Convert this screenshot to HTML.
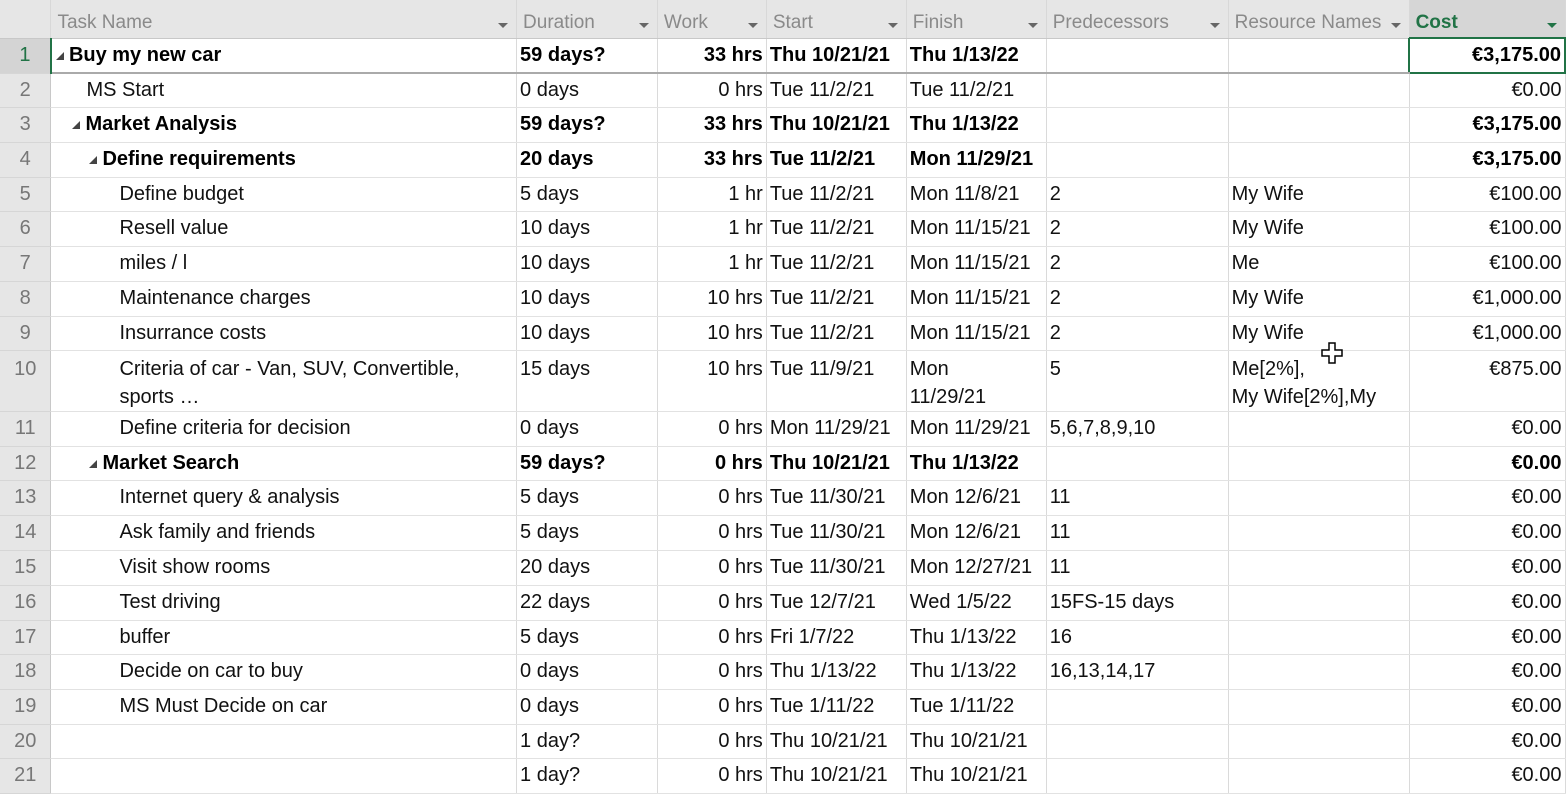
<!DOCTYPE html>
<html><head><meta charset="utf-8"><style>
*{margin:0;padding:0;box-sizing:border-box}
body{width:1566px;height:795px;overflow:hidden;background:#fff;font-family:"Liberation Sans",sans-serif;font-size:20px;color:#111}
table{border-collapse:collapse;table-layout:fixed;position:absolute;left:0;top:0}
td,th{overflow:hidden;white-space:nowrap;border-right:1px solid #dadada;border-bottom:1px solid #e2e2e2;padding:0 3px;vertical-align:middle}
th{background:#e6e6e6;font-weight:normal;color:#8a8a8a;text-align:left;height:38px;border-bottom:1px solid #c8c8c8;border-right:1px solid #d8d8d8;position:relative;padding-left:6px;padding-top:8px;font-size:19px}
th .dd{position:absolute;right:8px;top:23px;width:0;height:0;border-left:5px solid transparent;border-right:5px solid transparent;border-top:5px solid #666}
td.n{background:#e6e6e6;color:#777;text-align:center;border-right:1px solid #c8c8c8;border-bottom:1px solid #d6d6d6;font-weight:normal}
.b{font-weight:bold;color:#000}
.r{text-align:right}
.tri{display:inline-block;width:0;height:0;border-left:8px solid transparent;border-bottom:8px solid #444;margin-right:5px;vertical-align:1px}
tr.t10 td{vertical-align:top;padding-top:4px;white-space:normal;line-height:28px}
</style></head><body>
<table>
<colgroup><col style="width:51px"><col style="width:466px"><col style="width:141px"><col style="width:109px"><col style="width:140px"><col style="width:140px"><col style="width:182px"><col style="width:181px"><col style="width:156px"></colgroup>
<tr><th style="background:#e6e6e6"></th><th>Task Name<span class="dd"></span></th><th>Duration<span class="dd"></span></th><th>Work<span class="dd"></span></th><th>Start<span class="dd"></span></th><th>Finish<span class="dd"></span></th><th>Predecessors<span class="dd"></span></th><th>Resource Names<span class="dd"></span></th><th style="background:#d6d6d6;color:#217346;font-weight:bold">Cost<span class="dd" style="border-top-color:#217346"></span></th></tr>
<tr style="height:35px" class="b"><td class="n" style="background:#d4d4d4;color:#217346;border-right:2px solid #217346">1</td><td style="padding-left:4px;border-bottom:2px solid #aaa"><span class="tri"></span>Buy my new car</td><td style="border-bottom:2px solid #aaa">59 days?</td><td class="r" style="border-bottom:2px solid #aaa">33 hrs</td><td style="border-bottom:2px solid #aaa">Thu 10/21/21</td><td style="border-bottom:2px solid #aaa">Thu 1/13/22</td><td style="border-bottom:2px solid #aaa"></td><td style="border-bottom:2px solid #aaa"></td><td class="r" style="border:2px solid #217346">€3,175.00</td></tr>
<tr style="height:34px"><td class="n">2</td><td style="padding-left:35px">MS Start</td><td>0 days</td><td class="r">0 hrs</td><td>Tue 11/2/21</td><td>Tue 11/2/21</td><td></td><td></td><td class="r">€0.00</td></tr>
<tr style="height:35px" class="b"><td class="n">3</td><td style="padding-left:21px"><span class="tri"></span>Market Analysis</td><td>59 days?</td><td class="r">33 hrs</td><td>Thu 10/21/21</td><td>Thu 1/13/22</td><td></td><td></td><td class="r">€3,175.00</td></tr>
<tr style="height:35px" class="b"><td class="n">4</td><td style="padding-left:38px"><span class="tri"></span>Define requirements</td><td>20 days</td><td class="r">33 hrs</td><td>Tue 11/2/21</td><td>Mon 11/29/21</td><td></td><td></td><td class="r">€3,175.00</td></tr>
<tr style="height:34px"><td class="n">5</td><td style="padding-left:68px">Define budget</td><td>5 days</td><td class="r">1 hr</td><td>Tue 11/2/21</td><td>Mon 11/8/21</td><td>2</td><td>My Wife</td><td class="r">€100.00</td></tr>
<tr style="height:35px"><td class="n">6</td><td style="padding-left:68px">Resell value</td><td>10 days</td><td class="r">1 hr</td><td>Tue 11/2/21</td><td>Mon 11/15/21</td><td>2</td><td>My Wife</td><td class="r">€100.00</td></tr>
<tr style="height:35px"><td class="n">7</td><td style="padding-left:68px">miles / l</td><td>10 days</td><td class="r">1 hr</td><td>Tue 11/2/21</td><td>Mon 11/15/21</td><td>2</td><td>Me</td><td class="r">€100.00</td></tr>
<tr style="height:35px"><td class="n">8</td><td style="padding-left:68px">Maintenance charges</td><td>10 days</td><td class="r">10 hrs</td><td>Tue 11/2/21</td><td>Mon 11/15/21</td><td>2</td><td>My Wife</td><td class="r">€1,000.00</td></tr>
<tr style="height:34px"><td class="n">9</td><td style="padding-left:68px">Insurrance costs</td><td>10 days</td><td class="r">10 hrs</td><td>Tue 11/2/21</td><td>Mon 11/15/21</td><td>2</td><td>My Wife</td><td class="r">€1,000.00</td></tr>
<tr style="height:61px" class="t10"><td class="n" style="vertical-align:top">10</td><td style="padding-left:68px">Criteria of car - Van, SUV, Convertible,<br>sports …</td><td>15 days</td><td class="r">10 hrs</td><td>Tue 11/9/21</td><td>Mon<br>11/29/21</td><td>5</td><td style="white-space:nowrap">Me[2%],<br>My Wife[2%],My</td><td class="r">€875.00</td></tr>
<tr style="height:35px"><td class="n">11</td><td style="padding-left:68px">Define criteria for decision</td><td>0 days</td><td class="r">0 hrs</td><td>Mon 11/29/21</td><td>Mon 11/29/21</td><td>5,6,7,8,9,10</td><td></td><td class="r">€0.00</td></tr>
<tr style="height:34px" class="b"><td class="n">12</td><td style="padding-left:38px"><span class="tri"></span>Market Search</td><td>59 days?</td><td class="r">0 hrs</td><td>Thu 10/21/21</td><td>Thu 1/13/22</td><td></td><td></td><td class="r">€0.00</td></tr>
<tr style="height:35px"><td class="n">13</td><td style="padding-left:68px">Internet query &amp; analysis</td><td>5 days</td><td class="r">0 hrs</td><td>Tue 11/30/21</td><td>Mon 12/6/21</td><td>11</td><td></td><td class="r">€0.00</td></tr>
<tr style="height:35px"><td class="n">14</td><td style="padding-left:68px">Ask family and friends</td><td>5 days</td><td class="r">0 hrs</td><td>Tue 11/30/21</td><td>Mon 12/6/21</td><td>11</td><td></td><td class="r">€0.00</td></tr>
<tr style="height:35px"><td class="n">15</td><td style="padding-left:68px">Visit show rooms</td><td>20 days</td><td class="r">0 hrs</td><td>Tue 11/30/21</td><td>Mon 12/27/21</td><td>11</td><td></td><td class="r">€0.00</td></tr>
<tr style="height:35px"><td class="n">16</td><td style="padding-left:68px">Test driving</td><td>22 days</td><td class="r">0 hrs</td><td>Tue 12/7/21</td><td>Wed 1/5/22</td><td>15FS-15 days</td><td></td><td class="r">€0.00</td></tr>
<tr style="height:34px"><td class="n">17</td><td style="padding-left:68px">buffer</td><td>5 days</td><td class="r">0 hrs</td><td>Fri 1/7/22</td><td>Thu 1/13/22</td><td>16</td><td></td><td class="r">€0.00</td></tr>
<tr style="height:35px"><td class="n">18</td><td style="padding-left:68px">Decide on car to buy</td><td>0 days</td><td class="r">0 hrs</td><td>Thu 1/13/22</td><td>Thu 1/13/22</td><td>16,13,14,17</td><td></td><td class="r">€0.00</td></tr>
<tr style="height:35px"><td class="n">19</td><td style="padding-left:68px">MS Must Decide on car</td><td>0 days</td><td class="r">0 hrs</td><td>Tue 1/11/22</td><td>Tue 1/11/22</td><td></td><td></td><td class="r">€0.00</td></tr>
<tr style="height:34px"><td class="n">20</td><td></td><td>1 day?</td><td class="r">0 hrs</td><td>Thu 10/21/21</td><td>Thu 10/21/21</td><td></td><td></td><td class="r">€0.00</td></tr>
<tr style="height:35px"><td class="n">21</td><td></td><td>1 day?</td><td class="r">0 hrs</td><td>Thu 10/21/21</td><td>Thu 10/21/21</td><td></td><td></td><td class="r">€0.00</td></tr>
</table>
<svg style="position:absolute;left:1320px;top:341px" width="24" height="24" viewBox="0 0 24 24"><path d="M9 2h6v7h7v6h-7v7H9v-7H2V9h7z" fill="#fff" stroke="#000" stroke-width="1.5"/></svg>
</body></html>
